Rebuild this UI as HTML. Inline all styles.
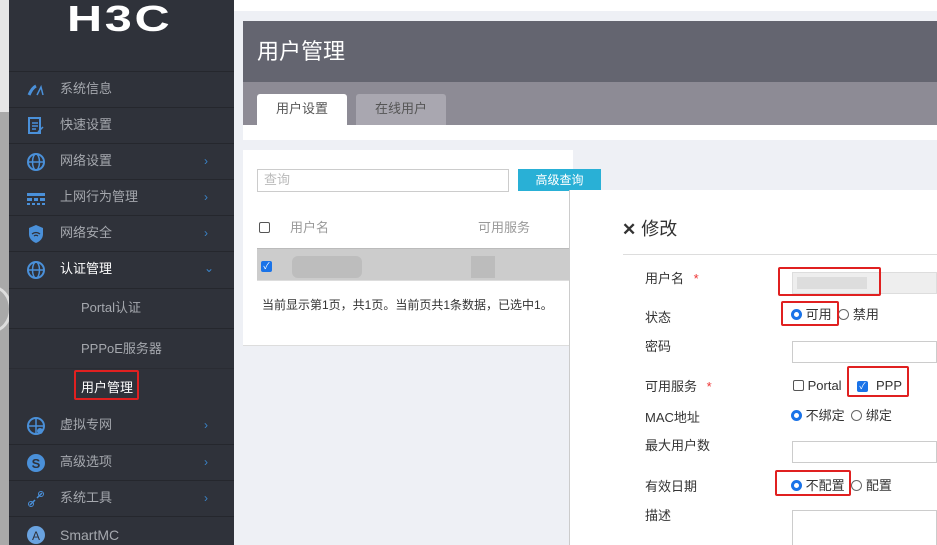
<!DOCTYPE html>
<html><head><meta charset="utf-8"><style>
*{margin:0;padding:0;box-sizing:border-box}
html,body{width:937px;height:545px;overflow:hidden}
body{position:relative;background:#eef0f5;font-family:"Liberation Sans","Noto Sans CJK SC",sans-serif;font-size:13px;line-height:16px;color:#333}
.abs{position:absolute}
#strip{left:0;top:0;width:9px;height:545px;background:#e6e6e6}
#strip2{left:0;top:112px;width:9px;height:433px;background:#a9a9a9}
#side{left:9px;top:0;width:225px;height:545px;background:#2f323a;overflow:hidden}
.logo{left:58px;top:-3px;color:#fff;font-weight:bold;font-size:36px;line-height:44px;letter-spacing:2px;font-family:"Liberation Sans",sans-serif;transform:scaleX(1.35);transform-origin:left}
.row{position:absolute;left:0;width:225px;border-top:1px solid #25272d;color:#a5a8ae;font-size:13px}
.row .t{position:absolute;left:51px}
.row .ic{position:absolute;left:17px;width:20px;height:20px}
.row .ar{position:absolute;left:195px;color:#3a83c8;font-size:12px}
.sub .t{left:72px}
</style></head><body>
<div class="abs" id="strip"></div><div class="abs" id="strip2"></div>
<div class="abs" style="left:-30px;top:285px;width:42px;height:48px;border-radius:50%;border:3px solid #ddd"></div>
<div class="abs" id="side">
<div class="abs logo">H3C</div>
<div class="row" style="top:71px;height:36px"><svg class="ic" style="top:8px" viewBox="0 0 20 20"><path d="M3 15 Q6 8 10 6" stroke="#4a90d9" stroke-width="3" fill="none"/><path d="M11 15 L15 7 L17 15" stroke="#4a90d9" stroke-width="1.5" fill="none"/></svg><span class="t" style="top:9px">系统信息</span></div>
<div class="row" style="top:107px;height:36px"><svg class="ic" style="top:8px" viewBox="0 0 20 20"><rect x="3" y="2" width="11" height="15" fill="none" stroke="#4a90d9" stroke-width="2"/><path d="M6 7h6M6 10h6M6 13h4M12 16l5-5" stroke="#4a90d9" stroke-width="1.5"/></svg><span class="t" style="top:9px">快速设置</span></div>
<div class="row" style="top:143px;height:36px"><svg class="ic" style="top:8px" viewBox="0 0 20 20"><circle cx="10" cy="10" r="8" fill="none" stroke="#4a90d9" stroke-width="2"/><ellipse cx="10" cy="10" rx="3.5" ry="8" fill="none" stroke="#4a90d9" stroke-width="1.5"/><path d="M2 10h16" stroke="#4a90d9" stroke-width="1.5"/></svg><span class="t" style="top:9px">网络设置</span><span class="ar" style="top:9px">›</span></div>
<div class="row" style="top:179px;height:36px"><svg class="ic" style="top:8px" viewBox="0 0 20 20"><path d="M1 5h18v3H1zM1 10h5v3H1zM8 10h4v3H8zM14 10h5v3h-5zM1 15h3v2H1zM6 15h3v2H6zM11 15h3v2h-3zM16 15h3v2h-3z" fill="#4a90d9"/></svg><span class="t" style="top:9px">上网行为管理</span><span class="ar" style="top:9px">›</span></div>
<div class="row" style="top:215px;height:36px"><svg class="ic" style="top:8px" viewBox="0 0 20 20"><path d="M10 1L17 4V10Q17 16 10 19Q3 16 3 10V4Z" fill="#4a90d9"/><path d="M6 10q4-3 8 0M8 12q2-1.5 4 0" stroke="#2f323a" stroke-width="1.3" fill="none"/></svg><span class="t" style="top:9px">网络安全</span><span class="ar" style="top:9px">›</span></div>
<div class="row" style="top:251px;height:37px"><svg class="ic" style="top:8px" viewBox="0 0 20 20"><circle cx="10" cy="10" r="8" fill="none" stroke="#4a90d9" stroke-width="2"/><ellipse cx="10" cy="10" rx="3.5" ry="8" fill="none" stroke="#4a90d9" stroke-width="1.5"/><path d="M2 10h16" stroke="#4a90d9" stroke-width="1.5"/></svg><span class="t" style="top:9px;color:#fff">认证管理</span><span class="ar" style="top:8px">⌄</span></div>
<div class="row sub" style="top:288px;height:40px"><span class="t" style="top:11px">Portal认证</span></div>
<div class="row sub" style="top:328px;height:40px"><span class="t" style="top:12px">PPPoE服务器</span></div>
<div class="row sub" style="top:368px;height:40px;border-top-color:#2a2c33"><span class="t" style="top:11px;color:#fff">用户管理</span></div>
<div class="abs" style="left:65px;top:370px;width:65px;height:30px;border:2px solid #e02020;border-radius:2px"></div>
<div class="row" style="top:408px;height:36px;border-top:none"><svg class="ic" style="top:8px" viewBox="0 0 20 20"><circle cx="10" cy="10" r="8" fill="none" stroke="#4a90d9" stroke-width="2"/><path d="M2 10h16M10 2v16" stroke="#4a90d9" stroke-width="1.5"/><circle cx="14" cy="15" r="3" fill="#4a90d9"/></svg><span class="t" style="top:9px">虚拟专网</span><span class="ar" style="top:9px">›</span></div>
<div class="row" style="top:444px;height:36px"><svg class="ic" style="top:8px" viewBox="0 0 20 20"><circle cx="10" cy="10" r="9" fill="#4a90d9"/><text x="10" y="15" font-size="13" font-weight="bold" fill="#2f323a" text-anchor="middle">S</text></svg><span class="t" style="top:9px">高级选项</span><span class="ar" style="top:9px">›</span></div>
<div class="row" style="top:480px;height:36px"><svg class="ic" style="top:8px" viewBox="0 0 20 20"><path d="M4 16l5-5M11 9l5-5" stroke="#4a90d9" stroke-width="1.5"/><circle cx="5" cy="15" r="2.5" fill="none" stroke="#4a90d9"/><circle cx="15" cy="5" r="2.5" fill="none" stroke="#4a90d9"/></svg><span class="t" style="top:9px">系统工具</span><span class="ar" style="top:9px">›</span></div>
<div class="row" style="top:516px;height:36px"><svg class="ic" style="top:8px" viewBox="0 0 20 20"><circle cx="10" cy="10" r="9" fill="#6aa3e0"/><text x="10" y="15" font-size="12" fill="#2f323a" text-anchor="middle">A</text></svg><span class="t" style="top:10px;font-size:14px">SmartMC</span></div>
</div>
<div class="abs" style="left:234px;top:0;width:703px;height:11px;background:#fff"></div>
<div class="abs" style="left:243px;top:21px;width:694px;height:61px;background:#646570;color:#fff;font-size:22px;line-height:26px;padding:18px 0 0 14px">用户管理</div>
<div class="abs" style="left:243px;top:82px;width:694px;height:43px;background:#8d8b95"></div>
<div class="abs" style="left:257px;top:94px;width:90px;height:31px;background:#fff;border-radius:3px 3px 0 0;text-align:center;line-height:30px;color:#555">用户设置</div>
<div class="abs" style="left:356px;top:94px;width:90px;height:32px;background:#a9a7b0;border-radius:3px 3px 0 0;text-align:center;line-height:30px;color:#555">在线用户</div>
<div class="abs" style="left:243px;top:125px;width:694px;height:15px;background:#fff"></div>
<div class="abs" style="left:243px;top:150px;width:330px;height:196px;background:#fff;border-bottom:1px solid #ddd"></div>
<div class="abs" style="left:257px;top:169px;width:252px;height:23px;border:1px solid #ccc;color:#bbb;padding:2px 6px">查询</div>
<div class="abs" style="left:518px;top:169px;width:83px;height:22px;background:#29b0d6;color:#fff;font-size:12px;text-align:center;line-height:22px">高级查询</div>
<div class="abs" style="left:259px;top:222px;width:11px;height:11px;border:1px solid #555;border-radius:2px"></div>
<div class="abs" style="left:290px;top:220px;color:#999">用户名</div>
<div class="abs" style="left:478px;top:220px;color:#999">可用服务</div>
<div class="abs" style="left:257px;top:248px;width:313px;height:33px;background:#cccccc;border-top:1px solid #bbb;border-bottom:1px solid #ddd"></div>
<div class="abs" style="left:261px;top:261px;width:11px;height:11px;background:#1a73e8;border-radius:2px;color:#fff;font-size:9px;line-height:11px;text-align:center">✓</div>
<div class="abs" style="left:292px;top:256px;width:70px;height:22px;background:#bdbdbd;border-radius:6px"></div>
<div class="abs" style="left:471px;top:256px;width:24px;height:22px;background:#bcbcbc"></div>
<div class="abs" style="left:262px;top:297px;font-size:12px;color:#333">当前显示第1页，共1页。当前页共1条数据，已选中1。</div>
<div class="abs" style="left:569px;top:190px;width:368px;height:355px;background:#fff;border-left:1px solid #ccc"></div>
<div class="abs" style="left:622px;top:218px;font-size:18px;line-height:22px;color:#333"><b style="font-size:17px">✕</b>&nbsp;修改</div>
<div class="abs" style="left:623px;top:254px;width:314px;height:1px;background:#ddd"></div>
<div class="abs" style="left:645px;top:271px">用户名 <span style="color:#e33;margin-left:6px">*</span></div>
<div class="abs" style="left:792px;top:272px;width:145px;height:22px;background:#eee;border:1px solid #ddd"></div>
<div class="abs" style="left:797px;top:277px;width:70px;height:12px;background:#ddd"></div>
<div class="abs" style="left:778px;top:267px;width:103px;height:29px;border:2px solid #e02020;border-radius:2px"></div>
<div class="abs" style="left:645px;top:310px">状态</div>
<div class="abs" style="left:791px;top:307px"><span style="display:inline-block;width:11px;height:11px;border-radius:50%;border:3px solid #1a73e8;vertical-align:-1px"></span> 可用 <span style="display:inline-block;width:11px;height:11px;border-radius:50%;border:1px solid #666;vertical-align:-1px;margin-left:3px"></span> 禁用</div>
<div class="abs" style="left:781px;top:301px;width:58px;height:25px;border:2px solid #e02020;border-radius:2px"></div>
<div class="abs" style="left:645px;top:339px">密码</div>
<div class="abs" style="left:792px;top:341px;width:145px;height:22px;border:1px solid #ccc"></div>
<div class="abs" style="left:645px;top:379px">可用服务 <span style="color:#e33;margin-left:6px">*</span></div>
<div class="abs" style="left:793px;top:378px"><span style="display:inline-block;width:11px;height:11px;border:1px solid #555;border-radius:2px;vertical-align:-1px"></span> Portal</div>
<div class="abs" style="left:857px;top:381px;width:11px;height:11px;background:#1a73e8;border-radius:2px;color:#fff;font-size:9px;line-height:11px;text-align:center">✓</div>
<div class="abs" style="left:876px;top:378px">PPP</div>
<div class="abs" style="left:847px;top:366px;width:62px;height:31px;border:2px solid #e02020;border-radius:2px"></div>
<div class="abs" style="left:645px;top:410px">MAC地址</div>
<div class="abs" style="left:791px;top:408px"><span style="display:inline-block;width:11px;height:11px;border-radius:50%;border:3px solid #1a73e8;vertical-align:-1px"></span> 不绑定 <span style="display:inline-block;width:11px;height:11px;border-radius:50%;border:1px solid #666;vertical-align:-1px;margin-left:3px"></span> 绑定</div>
<div class="abs" style="left:645px;top:438px">最大用户数</div>
<div class="abs" style="left:792px;top:441px;width:145px;height:22px;border:1px solid #ccc"></div>
<div class="abs" style="left:645px;top:479px">有效日期</div>
<div class="abs" style="left:791px;top:478px"><span style="display:inline-block;width:11px;height:11px;border-radius:50%;border:3px solid #1a73e8;vertical-align:-1px"></span> 不配置 <span style="display:inline-block;width:11px;height:11px;border-radius:50%;border:1px solid #666;vertical-align:-1px;margin-left:3px"></span> 配置</div>
<div class="abs" style="left:775px;top:470px;width:76px;height:26px;border:2px solid #e02020;border-radius:2px"></div>
<div class="abs" style="left:645px;top:508px">描述</div>
<div class="abs" style="left:792px;top:510px;width:145px;height:40px;border:1px solid #ccc"></div>
</body></html>
